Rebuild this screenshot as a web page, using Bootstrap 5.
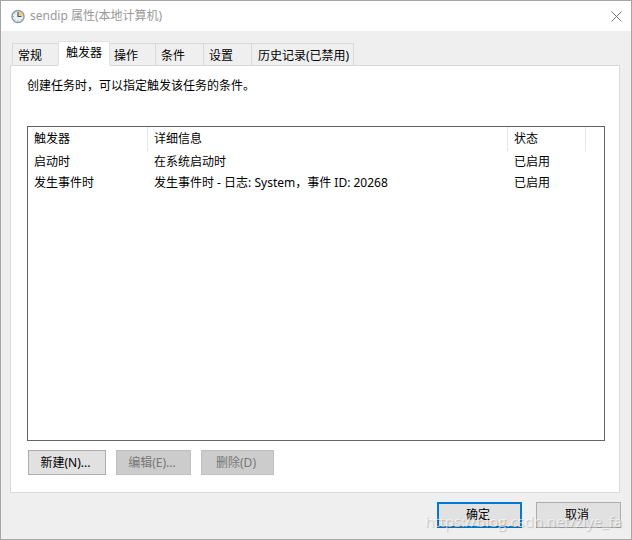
<!DOCTYPE html>
<html lang="zh-CN">
<head>
<meta charset="utf-8">
<meta name="viewport" content="width=device-width, initial-scale=1">
<title>sendip 属性(本地计算机)</title>
<link href="https://cdn.jsdelivr.net/npm/bootstrap@5.3.0/dist/css/bootstrap.min.css" rel="stylesheet">
<style>
body { font-family: "Noto Sans", "Noto Sans CJK SC", sans-serif; font-size: 12px; line-height: 16px; color: #000; background: #efefef; }
.dialog { border: 1px solid #a6a6a6; }
.titlebar { height: 30px; background: #fff; color: #999; padding: 0 5px 0 9px; }
.close-x { border: 0; background: none; padding: 0; width: 20px; height: 20px; color: #777; }
.dialog-main { padding: 10px 11px 11px 9px; }
.nav-tabs { border: 0; padding-left: 2px; align-items: flex-end; }
.nav-tabs .nav-link { border: 1px solid #d9d9d9; border-radius: 0; color: #000; background: #efefef; height: 23px; padding: 2px 0 0 5px; text-align: left; width: 49px; margin: 0 0 -1px -1px; }
.nav-tabs .nav-item:first-child .nav-link { width: 47px; margin-left: 0; }
.nav-tabs .nav-link.active { width: 52px; height: 25px; background: #fff; border-bottom-color: #fff; padding: 1px 0 2px 7px; color: #000; position: relative; z-index: 1; }
.nav-tabs .nav-link.tab-after { width: 47px; padding-left: 4px; }
.nav-tabs .nav-link.tab-wide { width: 103px; padding-left: 6px; }
.page-panel { background: #fff; border: 1px solid #d9d9d9; padding: 12px 14px 17px 16px; }
.list-frame { border: 1px solid #646464; min-height: 200px; margin-top: 32px; }
.list-frame table { table-layout: fixed; width: 100%; border-collapse: separate; border-spacing: 0; }
.list-frame th, .list-frame td { font-weight: 400; padding: 3px 6px 2px; height: 21px; white-space: nowrap; text-align: left; }
.list-frame th { height: 24px; padding: 4px 6px; border-right: 1px solid #e5e5e5; }
.list-frame th:last-child { border: 0; }
.col-trigger { width: 120px; } .col-state { width: 78px; } .col-rest { width: 18px; }
.btn-win { --bs-btn-font-size: 12px; --bs-btn-line-height: 16px; --bs-btn-border-radius: 0; --bs-btn-color: #000; --bs-btn-bg: #e1e1e1; --bs-btn-border-color: #adadad; --bs-btn-hover-bg: #e5f1fb; --bs-btn-hover-border-color: #0078d7; --bs-btn-disabled-bg: #ccc; --bs-btn-disabled-color: #777; --bs-btn-disabled-border-color: #bfbfbf; --bs-btn-disabled-opacity: 1; height: 25px; width: 75px; padding: 0 3px 0 0; }
.btn-new { width: 78px; }
.btn-delete { width: 73px; }
.btn-footer { width: 85px; height: 26px; }
.btn-ok { border: 2px solid #0078d7; }
.list-actions { margin: 9px 0 0 1px; gap: 10px; }
.footer-actions { gap: 14px; padding-top: 9px; margin-right: -1px; }
.watermark { position: absolute; right: 9px; bottom: 8px; font-family: "Open Sans", sans-serif; font-size: 15px; line-height: 20px; color: rgba(255,255,255,.6); text-shadow: 1px 1px 1px rgba(0,0,0,.2); pointer-events: none; }
</style>
<script src="https://cdn.jsdelivr.net/npm/bootstrap@5.3.0/dist/js/bootstrap.bundle.min.js"></script>
</head>
<body>
<div class="dialog d-flex flex-column min-vh-100 position-relative">
  <header class="titlebar d-flex align-items-center">
    <svg class="me-1" width="16" height="16" viewBox="0 0 16 16" aria-hidden="true">
      <circle cx="8" cy="8.500" r="6" fill="#e8f1f6" stroke="#8e979d" stroke-width="1.4"/>
      <path d="M8 8.500v-5a5 5 0 0 1 5 5z" fill="#f2cd7c"/>
      <path d="M8 4v4.500h3.500" fill="none" stroke="#4c5660" stroke-width="1.2"/>
      <path d="M3 8.500h1M8 12.500v1M4.500 5l.7.7M4.500 12l.7-.7M11.500 12l-.7-.7" stroke="#9aabb5"/>
    </svg>
    <span>sendip 属性(本地计算机)</span>
    <button class="close-x ms-auto d-flex align-items-center justify-content-center" type="button" aria-label="关闭">
      <svg width="11" height="11" viewBox="0 0 11 11"><path d="M.5.5l10 10M10.500.5l-10 10" fill="none" stroke="currentColor"/></svg>
    </button>
  </header>
  <main class="dialog-main flex-grow-1 d-flex flex-column">
    <ul class="nav nav-tabs" role="tablist">
      <li class="nav-item"><button class="nav-link" type="button" role="tab">常规</button></li>
      <li class="nav-item"><button class="nav-link active" type="button" role="tab" aria-selected="true">触发器</button></li>
      <li class="nav-item"><button class="nav-link tab-after" type="button" role="tab">操作</button></li>
      <li class="nav-item"><button class="nav-link" type="button" role="tab">条件</button></li>
      <li class="nav-item"><button class="nav-link" type="button" role="tab">设置</button></li>
      <li class="nav-item"><button class="nav-link tab-wide" type="button" role="tab">历史记录(已禁用)</button></li>
    </ul>
    <section class="page-panel flex-grow-1 d-flex flex-column">
      <p class="mb-0">创建任务时，可以指定触发该任务的条件。</p>
      <div class="list-frame flex-grow-1">
        <table>
          <colgroup><col class="col-trigger"><col><col class="col-state"><col class="col-rest"></colgroup>
          <thead><tr><th scope="col">触发器</th><th scope="col">详细信息</th><th scope="col">状态</th><th></th></tr></thead>
          <tbody>
            <tr><td>启动时</td><td>在系统启动时</td><td>已启用</td><td></td></tr>
            <tr><td>发生事件时</td><td>发生事件时 - 日志: System，事件 ID: 20268</td><td>已启用</td><td></td></tr>
          </tbody>
        </table>
      </div>
      <div class="list-actions d-flex">
        <button class="btn btn-win btn-new" type="button">新建(N)...</button>
        <button class="btn btn-win" type="button" disabled>编辑(E)...</button>
        <button class="btn btn-win btn-delete" type="button" disabled>删除(D)</button>
      </div>
    </section>
    <div class="footer-actions d-flex justify-content-end">
      <button class="btn btn-win btn-footer btn-ok" type="button">确定</button>
      <button class="btn btn-win btn-footer" type="button">取消</button>
    </div>
  </main>
  <div class="watermark">https://blog.csdn.net/ziye_fa</div>
</div>
</body>
</html>
